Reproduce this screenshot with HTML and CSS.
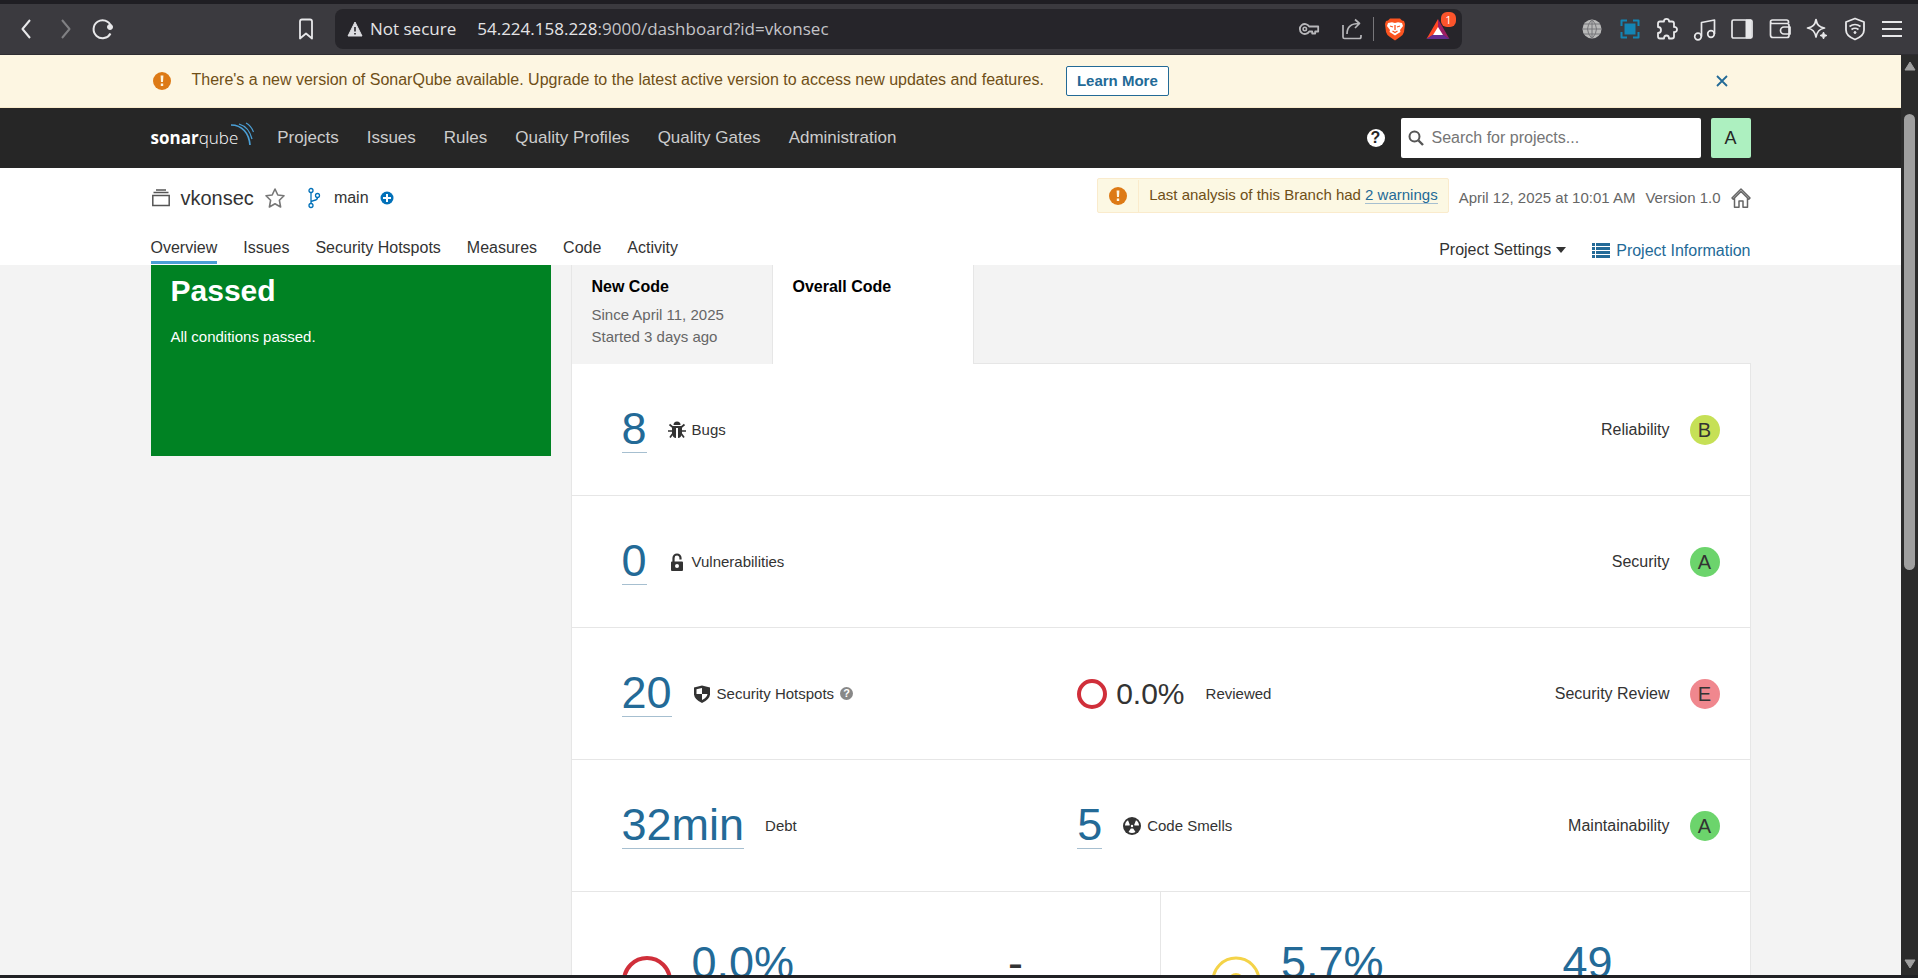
FILE: index.html
```html
<!DOCTYPE html>
<html lang="en">
<head>
  <meta charset="UTF-8" />
  <meta name="viewport" content="width=device-width, initial-scale=1.0" />
  <title>vkonsec - SonarQube</title>
  <link rel="stylesheet" href="styles.css">
</head>
<body>
  <!-- browser toolbar -->
  <div class="toolbar">
    <div class="toolbar-left">
      <button class="tool" aria-label="Back"><svg width="24" height="24" viewBox="0 0 24 24"><path d="M15 3L7.500 12l7.500 9" stroke-width="2"/></svg></button>
      <button class="tool tool-off" aria-label="Forward"><svg width="24" height="24" viewBox="0 0 24 24"><path d="M9 3l7.500 9L9 21" stroke-width="2"/></svg></button>
      <button class="tool" aria-label="Reload"><svg width="24" height="24" viewBox="0 0 24 24"><path d="M19.500 16.500A9 9 0 1 1 20 9" stroke-width="2"/><circle cx="19" cy="10" r="2.500" fill="#e8e8ea"/></svg></button>
      <button class="tool tool-bookmark" aria-label="Bookmark"><svg width="24" height="24" viewBox="0 0 24 24"><path d="M6 4.500q0-2 2-2h8q2 0 2 2v17l-6-5-6 5z" stroke-width="1.800"/></svg></button>
    </div>
    <div class="address">
      <svg width="16" height="16" viewBox="0 0 16 16"><path d="M8 1l7 14H1z" fill="#dcdce0" stroke="#dcdce0" stroke-linejoin="round"/><path d="M8 6v4.500M8 12v1.600" stroke="#26252a" stroke-width="1.600"/></svg>
      <span class="address-state">Not secure</span>
      <span class="address-url">54.224.158.228<span class="address-path">:9000/dashboard?id=vkonsec</span></span>
      <div class="address-tools">
        <button class="tool tool-dim" aria-label="Passwords"><svg width="24" height="24" viewBox="0 0 24 24"><path d="M12.200 9.500a5 5 0 1 0 0 5h3v2h3v-2h3v-5z" stroke-width="1.800"/><circle cx="7.800" cy="12" r="1.700" stroke-width="1.600"/></svg></button>
        <div class="address-pair">
          <button class="tool tool-dim" aria-label="Share"><svg width="24" height="24" viewBox="0 0 24 24"><path d="M3 8v12q0 1.500 1.500 1.500h15q1.500 0 1.500-2V18M7 17c0-7 4-10.500 12-10.500M15 2.500l4.500 4-4.500 4.500" stroke-width="1.700"/></svg></button>
          <span class="divider"></span>
          <button class="tool" aria-label="Brave Shields"><svg width="24" height="24" viewBox="0 0 24 24"><path d="M7 1.500h10l2 2 2 .5 1 3-1 8q-.5 2.500-4 5L12 23.500 7 20q-3.500-2.500-4-5L2 7l1-3 2-.5z" fill="#fb5420" stroke="none"/><path d="M5 6l4-.8 3 .8 3-.8 4 .8 1 3-3 4 .5 2-2.500 1.500L12 18.500 9 16.500 6.500 15l.5-2-3-4z" fill="#fff" stroke="none"/><path d="M7 9l3 1M17 9l-3 1M12 8v5M9.500 14l2.500 1.500 2.500-1.500" stroke="#fb5420" stroke-width="1.300"/></svg></button>
        </div>
        <button class="tool tool-rewards" aria-label="Brave Rewards"><svg width="24" height="24" viewBox="0 0 24 24"><path d="M12 2L.500 22 12 15z" fill="#ff4724" stroke="none"/><path d="M12 2l11.500 20L12 15z" fill="#9e1f63" stroke="none"/><path d="M.500 22h23L12 14z" fill="#662d91" stroke="none"/><path d="M12 10l5 8H7z" fill="#fff" stroke="none"/></svg><span class="badge">1</span></button>
      </div>
    </div>
    <div class="toolbar-right">
      <button class="tool" aria-label="Translate"><svg width="24" height="24" viewBox="0 0 24 24"><circle cx="12" cy="12" r="9.500" fill="#b9b9b9" stroke="none"/><path d="M2.500 12h19M4 7h16M4 17h16M12 2.500v19M12 2.500q-9 9.500 0 19M12 2.500q9 9.500 0 19" stroke="#77767a" stroke-width="1"/></svg></button>
      <button class="tool" aria-label="Capture"><svg width="24" height="24" viewBox="0 0 24 24"><path d="M3.500 9V3.500H9M15 3.500h5.500V9M20.500 15v5.500H15M9 20.500H3.500V15" stroke="#1485b5" stroke-width="2"/><path d="M6.500 6.500h11v11h-11z" fill="#1485b5" stroke="none"/></svg></button>
      <button class="tool" aria-label="Extensions"><svg width="24" height="24" viewBox="0 0 24 24"><path d="M3 6.500q0-2 2-2h4C8.500 1 14.500 1 14 4.500h3q2 0 2 2V10c4-.500 4 5.500 0 5v4.500q0 2-2 2h-3c0-4-5-4-5 0H5q-2 0-2-2V16c4 0 4-6 0-6z" stroke-width="1.800"/></svg></button>
      <button class="tool" aria-label="Media"><svg width="24" height="24" viewBox="0 0 24 24"><path d="M8.500 19.500v-14L21.500 3v14" stroke-width="1.700"/><circle cx="5" cy="19.500" r="3.300" stroke-width="1.700"/><circle cx="18" cy="17" r="3.300" stroke-width="1.700"/></svg></button>
      <button class="tool" aria-label="Sidebar"><svg width="24" height="24" viewBox="0 0 24 24"><rect x="2" y="3" width="20" height="18" rx="1.500" stroke-width="1.700"/><path d="M16 3h5v18h-5z" fill="#e8e8ea"/></svg></button>
      <button class="tool" aria-label="Wallet"><svg width="24" height="24" viewBox="0 0 24 24"><path d="M20.500 6V5q0-2-2-2h-14Q2.500 3 2.500 5v13q0 2.500 2.500 2.500h14q2 0 2-2V8.500q0-2-2-2H4q-1.500 0-1.500-2M22 10h-6a3.500 3.500 0 0 0 0 7h6z" stroke-width="1.700"/></svg></button>
      <button class="tool" aria-label="Leo AI"><svg width="24" height="24" viewBox="0 0 24 24"><path d="M11 2.500c1 5.500 3 7.500 8.500 8.500-5.500 1-7.500 3.500-8.500 9-1-5.500-3-8-8.500-9C8 10 10 8 11 2.500z" stroke-width="1.700"/><path d="M18.500 15l1 2.500 2.500 1-2.500 1-1 2.500-1-2.500-2.500-1 2.500-1z" fill="#e8e8ea" stroke-width="1"/></svg></button>
      <button class="tool" aria-label="VPN"><svg width="24" height="24" viewBox="0 0 24 24"><path d="M12 1.500l9 3.500v8q0 6-9 9.500Q3 19 3 13V5z" stroke-width="1.800"/><path d="M6.500 9.500q5.500-4 11 0M8.500 12.500q3.500-2.500 7 0" stroke-width="1.700"/><circle cx="12" cy="15.500" r="1" fill="#e8e8ea" stroke-width="1"/></svg></button>
      <button class="tool" aria-label="Menu"><svg width="24" height="24" viewBox="0 0 24 24"><path d="M2 5h20M2 12h20M2 19h20" stroke-width="2"/></svg></button>
    </div>
  </div>

  <div class="window">
    <div class="page">
      <div class="update">
        <div class="container update-row">
          <svg class="update-icon" width="20" height="20" viewBox="0 0 20 20"><circle cx="10" cy="10" r="9" fill="#dd7a16"/><path d="M8.600 4.500h2.800l-.4 6.500H9zM8.800 12.500h2.400v2.500H8.800z" fill="#fdf6e2"/></svg>
          <span class="update-text">There's a new version of SonarQube available. Upgrade to the latest active version to access new updates and features.</span>
          <a class="update-link" href="#">Learn More</a>
          <button class="update-close" aria-label="Dismiss"><svg width="14" height="14" viewBox="0 0 14 14"><path d="M2 2l10 10M12 2L2 12" stroke="#236a97" stroke-width="1.800"/></svg></button>
        </div>
      </div>

      <header class="navbar">
        <div class="container navbar-row">
          <a class="logo" href="#"><b>sonar</b>qube<svg width="24" height="28" viewBox="0 0 24 28" fill="none" stroke="#4b9fd5"><path d="M1 4c11 0 18 8 19 20" stroke-width="1.700"/><path d="M9 3c7 2 11 7 13 15" stroke-width="1.300"/><path d="M16 2c4 2 6 5 7.500 9" stroke-width="1.100"/></svg></a>
          <nav class="main-menu">
            <a href="#">Projects</a>
            <a href="#">Issues</a>
            <a href="#">Rules</a>
            <a href="#">Quality Profiles</a>
            <a href="#">Quality Gates</a>
            <a href="#">Administration</a>
          </nav>
          <button class="help" aria-label="Help">?</button>
          <label class="search">
            <svg width="16" height="16" viewBox="0 0 16 16" fill="none" stroke="#555"><circle cx="6.500" cy="6.500" r="5" stroke-width="2"/><path d="M10.500 10.500l4.500 4.500" stroke-width="2.400"/></svg>
            <input type="text" placeholder="Search for projects..." aria-label="Search for projects">
          </label>
          <button class="avatar">A</button>
        </div>
      </header>

      <div class="project">
        <div class="container">
          <div class="project-row">
            <svg width="20" height="20" viewBox="0 0 20 20" fill="none" stroke="#555" stroke-width="1.500"><path d="M1.800 7.500h16.400v10H1.800zM2.500 4.500h15M5 2h10"/></svg>
            <h1 class="project-name">vkonsec</h1>
            <button class="plain" aria-label="Favorite"><svg width="22" height="22" viewBox="0 0 22 22"><path d="M11 2l2.800 6 6.200.800-4.600 4.500 1.200 6.700-5.600-3.200L5.400 20l1.200-6.700L2 8.800 8.200 8z" fill="none" stroke="#777" stroke-width="1.600" stroke-linejoin="round"/></svg></button>
            <svg class="branch-icon" width="16" height="22" viewBox="0 0 16 22" fill="none" stroke="#0271b9" stroke-width="1.300"><circle cx="5" cy="3.500" r="2"/><circle cx="5" cy="18.500" r="2"/><circle cx="11.500" cy="8.500" r="2"/><path d="M5 5.500v11M11.500 10.500q0 2.500-3.500 3-3 .5-3 2"/></svg>
            <span class="branch">main</span>
            <svg width="14" height="14" viewBox="0 0 14 14"><circle cx="7" cy="7" r="6.500" fill="#0271b9"/><path d="M7 3v8M3 7h8" stroke="#fff" stroke-width="2"/></svg>
            <div class="warning">
              <span class="warning-icon"><svg width="20" height="20" viewBox="0 0 20 20"><circle cx="10" cy="10" r="9" fill="#dd7a16"/><path d="M8.600 4.500h2.800l-.4 6.500H9zM8.800 12.500h2.400v2.500H8.800z" fill="#fdf6e2"/></svg></span>
              <span class="warning-text">Last analysis of this Branch had <a href="#">2 warnings</a></span>
            </div>
            <span class="meta">April 12, 2025 at 10:01 AM</span>
            <span class="meta">Version 1.0</span>
            <a class="home" href="#" aria-label="Homepage"><svg width="20" height="20" viewBox="0 0 20 20" fill="none" stroke="#666" stroke-width="1.500" stroke-linejoin="round"><path d="M1 10l9-9 9 9-1.200 1.200L10 3.500l-7.800 7.700zM3.500 10v9.200H8V13h4v6.200h4.500V10"/></svg></a>
          </div>
          <div class="tabs-row">
            <nav class="tabs">
              <a class="active" href="#">Overview</a>
              <a href="#">Issues</a>
              <a href="#">Security Hotspots</a>
              <a href="#">Measures</a>
              <a href="#">Code</a>
              <a href="#">Activity</a>
            </nav>
            <button class="plain settings">Project Settings <svg width="10" height="6" viewBox="0 0 10 6"><path d="M0 0h10L5 6z" fill="#333"/></svg></button>
            <a class="info" href="#"><svg width="18" height="16" viewBox="0 0 18 16" fill="#236a97"><path d="M0 0h3v3H0zM0 4h3v3H0zM0 8h3v3H0zM0 12h3v3H0zM4 0h14v3H4zM4 4h14v3H4zM4 8h14v3H4zM4 12h14v3H4z"/></svg>Project Information</a>
          </div>
        </div>
      </div>

      <main class="container overview">
        <section class="gate">
          <h2>Passed</h2>
          <p>All conditions passed.</p>
        </section>

        <section class="measures">
          <div class="code-tabs">
            <button class="code-tab">
              <strong>New Code</strong>
              <span>Since April 11, 2025</span>
              <span>Started 3 days ago</span>
            </button>
            <button class="code-tab selected"><strong>Overall Code</strong></button>
            <div class="code-tabs-rest"></div>
          </div>

          <div class="panel">
            <div class="row">
              <div class="cell first">
                <a class="number" href="#">8</a>
                <span class="label"><svg width="18" height="18" viewBox="0 0 18 18"><path d="M5.500 4a3.500 3.500 0 0 1 7 0z" fill="#333"/><path d="M4 5h10v8q-1 4-4 4V7H8v10q-3 0-4-4z" fill="#333"/><path d="M4.500 6L1.500 3.500M13.500 6l3-2.500M0 10h4M14 10h4M4.500 13L2 16.500M13.500 13l2.500 3.500" stroke="#333" stroke-width="1.700"/></svg>Bugs</span>
              </div>
              <div class="cell rating">Reliability <a class="grade grade-b" href="#">B</a></div>
            </div>

            <div class="row">
              <div class="cell first">
                <a class="number" href="#">0</a>
                <span class="label"><svg width="18" height="18" viewBox="0 0 18 18"><path d="M5.500 9V5a3.500 3.500 0 0 1 7 0v1.500" fill="none" stroke="#333" stroke-width="2.200"/><path fill-rule="evenodd" d="M4 8.500h10q1 0 1 1V17q0 1-1 1H4q-1 0-1-1V9.500q0-1 1-1zM9 11a2 2 0 1 0 0 4 2 2 0 0 0 0-4z" fill="#333"/></svg>Vulnerabilities</span>
              </div>
              <div class="cell rating">Security <a class="grade grade-a" href="#">A</a></div>
            </div>

            <div class="row">
              <div class="cell first">
                <a class="number" href="#">20</a>
                <span class="label"><svg width="18" height="18" viewBox="0 0 18 18"><path d="M9 .500l8 2v7q-.5 5-8 8.500Q1.500 14.500 1 9.500v-7z" fill="#333"/><path d="M9 3v6H3.500V4.200zM9 9h5.500q-.5 3.500-5.500 6z" fill="#fff"/></svg>Security Hotspots<span class="hint">?</span></span>
              </div>
              <div class="cell">
                <svg width="30" height="30" viewBox="0 0 30 30"><circle cx="15" cy="15" r="13" fill="none" stroke="#d02f3a" stroke-width="4"/></svg>
                <span class="percent">0.0%</span>
                <span class="label">Reviewed</span>
              </div>
              <div class="cell rating">Security Review <a class="grade grade-e" href="#">E</a></div>
            </div>

            <div class="row">
              <div class="cell first">
                <a class="number" href="#">32min</a>
                <span class="label">Debt</span>
              </div>
              <div class="cell">
                <a class="number" href="#">5</a>
                <span class="label"><svg width="18" height="18" viewBox="0 0 18 18"><circle cx="9" cy="9" r="9" fill="#333"/><path d="M6.800 7.800L5 3.200Q2 5 2 8.500h4.500zM11.200 7.800L13 3.200q3 1.800 3 5.300h-4.500zM7.800 11.500L5.500 15q3.500 2 7 0l-2.300-3.500z" fill="#fff"/><circle cx="9" cy="9" r="1.200" fill="#fff"/></svg>Code Smells</span>
              </div>
              <div class="cell rating">Maintainability <a class="grade grade-a" href="#">A</a></div>
            </div>

            <div class="halves">
              <div class="half">
                <svg width="50" height="50" viewBox="0 0 50 50"><circle cx="25" cy="25" r="23" fill="none" stroke="#d02f3a" stroke-width="4"/></svg>
                <a class="number" href="#">0.0%</a>
                <span class="number none">-</span>
              </div>
              <div class="half">
                <svg width="50" height="50" viewBox="0 0 50 50"><circle cx="25" cy="25" r="23" fill="none" stroke="#f4d348" stroke-width="3"/><circle cx="25" cy="25" r="8" fill="#f4d348"/></svg>
                <a class="number" href="#">5.7%</a>
                <a class="number blocks" href="#">49</a>
              </div>
            </div>
          </div>
        </section>
      </main>
    </div>

    <div class="scrollbar">
      <svg width="12" height="10" viewBox="0 0 12 10"><path d="M6 1l5 8H1z" fill="#9f9f9f" stroke="#9f9f9f" stroke-linejoin="round"/></svg>
      <div class="track"><div class="thumb"></div></div>
      <svg width="12" height="10" viewBox="0 0 12 10"><path d="M6 9l5-8H1z" fill="#9f9f9f" stroke="#9f9f9f" stroke-linejoin="round"/></svg>
    </div>
  </div>
</body>
</html>
```
FILE: styles.css
```css
* {
  box-sizing: border-box;
}
body {
  margin: 0;
  height: 100vh;
  display: flex;
  flex-direction: column;
  overflow: hidden;
  border-top: 4px solid #1f1e23;
  border-bottom: 3px solid #202124;
  font-family: "Liberation Sans", Arial, sans-serif;
  font-size: 16px;
  line-height: 20px;
  color: #333;
  background-color: #f3f3f3;
}
h1, h2, p {
  margin: 0;
}
a {
  color: #236a97;
  text-decoration: none;
}
button {
  font: inherit;
  color: inherit;
  cursor: pointer;
}
svg {
  display: block;
  flex: none;
}

/* browser toolbar */
.toolbar {
  display: flex;
  flex: none;
  align-items: center;
  height: 51px;
  background-color: #3b3a3f;
  border-bottom: 1px solid #2e2d32;
}
.toolbar-left {
  display: flex;
  gap: 14px;
  width: 335px;
  padding: 0 17px 0 15px;
}
.tool {
  position: relative;
  padding: 0;
  border: 0;
  background: none;
}
.tool svg {
  fill: none;
  stroke: #e8e8ea;
  stroke-linejoin: round;
}
.tool-off {
  opacity: 0.4;
}
.tool-dim {
  opacity: 0.75;
}
.tool-bookmark {
  margin-left: auto;
}
.address {
  flex: 1;
  display: flex;
  align-items: center;
  height: 40px;
  padding: 0 12px;
  border-radius: 8px;
  background-color: #26252a;
  color: #e4e4e6;
  font-family: "Open Sans", "Noto Sans", sans-serif;
  font-size: 17px;
}
.address-state {
  margin: 0 21px 0 7px;
}
.address-path {
  color: #c4c4c8;
}
.address-tools {
  display: flex;
  gap: 19px;
  margin-left: auto;
}
.address-pair {
  display: flex;
  gap: 9px;
}
.divider {
  width: 1px;
  background-color: #77767a;
}
.badge {
  position: absolute;
  top: -5px;
  right: -6px;
  width: 15px;
  height: 15px;
  border-radius: 6px;
  background-color: #fb542b;
  color: #fff;
  font-size: 11px;
  line-height: 15px;
}
.toolbar-right {
  display: flex;
  justify-content: space-between;
  width: 456px;
  padding: 0 14px 0 118px;
}

.window {
  flex: 1;
  min-height: 0;
  display: flex;
}
.page {
  flex: 1;
  min-width: 0;
  overflow: hidden;
}
.container {
  max-width: 1640px;
  margin: 0 auto;
  padding: 0 20px;
}

/* update banner */
.update {
  background-color: #fdf6e2;
  border-bottom: 1px solid #faebcc;
}
.update-row {
  display: flex;
  align-items: center;
  height: 52px;
}
.update-icon {
  margin: 0 20px 0 1px;
}
.update-text {
  color: #6f4f17;
  padding-bottom: 2px;
}
.update-link {
  margin-left: 22px;
  padding: 4px 10px;
  border: 1px solid #236a97;
  border-radius: 2px;
  background-color: #fff;
  font-size: 15px;
  font-weight: bold;
}
.update-close {
  margin: 0 22px 0 auto;
  padding: 0;
  border: 0;
  background: none;
}

/* top navigation */
.navbar {
  background-color: #262626;
}
.navbar-row {
  display: flex;
  align-items: center;
  height: 60px;
}
.logo {
  display: flex;
  align-items: center;
  margin-right: 23px;
  color: #fff;
  font-family: "Open Sans", sans-serif;
  font-size: 17px;
  font-weight: 300;
}
.logo b {
  font-weight: 700;
}
.logo svg {
  margin: 0 0 6px -8px;
}
.main-menu {
  display: flex;
  gap: 28px;
}
.main-menu a {
  color: #ccc;
  font-size: 17px;
}
.help {
  width: 18px;
  height: 18px;
  margin-left: auto;
  padding: 0;
  border: 0;
  border-radius: 50%;
  background-color: #fff;
  color: #262626;
  font-weight: bold;
  line-height: 18px;
}
.search {
  display: flex;
  align-items: center;
  gap: 8px;
  width: 300px;
  height: 40px;
  margin: 0 10px 0 16px;
  padding: 0 7px;
  border-radius: 2px;
  background-color: #fff;
}
.search input {
  flex: 1;
  min-width: 0;
  padding: 0;
  border: 0;
  outline: 0;
  font: inherit;
}
.search input::placeholder {
  color: #757575;
}
.avatar {
  width: 40px;
  height: 40px;
  padding: 0;
  border: 0;
  border-radius: 2px;
  background-color: #adf0c0;
  color: #262626;
  font-size: 18px;
}

/* project header */
.project {
  background-color: #fff;
}
.project-row {
  display: flex;
  align-items: center;
  padding-top: 10px;
}
.project-name {
  margin: 0 10px;
  font-size: 20px;
  font-weight: normal;
}
.plain {
  padding: 0;
  border: 0;
  background: none;
}
.branch-icon {
  margin: 0 12px 0 20px;
}
.branch {
  margin-right: 11px;
}
.warning {
  display: flex;
  align-items: center;
  height: 35px;
  margin: 0 10px 4px auto;
  border: 1px solid #faebcc;
  border-radius: 2px;
  background-color: #fcf8e3;
  color: #6f4f17;
  font-size: 15px;
}
.warning-icon {
  padding: 6px 10px;
  border-right: 1px solid #faebcc;
}
.warning-text {
  padding: 0 10px 2px;
}
.warning-text a {
  border-bottom: 1px solid #a6bfd0;
}
.meta {
  margin-right: 10px;
  color: #666;
  font-size: 15px;
}
.tabs-row {
  display: flex;
  align-items: flex-end;
  padding-top: 21px;
}
.tabs {
  display: flex;
  gap: 26px;
  margin-right: auto;
  padding-bottom: 1px;
}
.tabs a {
  padding-bottom: 3px;
  border-bottom: 3px solid transparent;
  color: #333;
}
.tabs .active {
  border-color: #4b9fd5;
}
.settings {
  display: flex;
  align-items: center;
  gap: 5px;
  margin-right: 26px;
  padding-bottom: 5px;
}
.info {
  display: flex;
  align-items: center;
  gap: 6px;
  padding-bottom: 4px;
}

/* overview */
.overview {
  display: flex;
  align-items: flex-start;
  gap: 20px;
}
.gate {
  width: 25%;
  height: 191px;
  padding: 10px 20px;
  background-color: #008223;
  color: #fff;
  font-size: 15px;
}
.gate h2 {
  margin-bottom: 20px;
  font-size: 30px;
  line-height: 32px;
}
.measures {
  flex: 1;
}
.code-tabs {
  display: flex;
  height: 99px;
  border-left: 1px solid #e6e6e6;
}
.code-tab {
  display: flex;
  flex-direction: column;
  width: 201px;
  padding: 12px 20px;
  border: 0;
  border-right: 1px solid #e6e6e6;
  background: none;
  color: #666;
  font-size: 15px;
  line-height: 22px;
  text-align: left;
}
.code-tab strong {
  margin-bottom: 7px;
  color: #000;
  font-size: 16px;
  line-height: 20px;
}
.code-tab.selected {
  background-color: #fff;
}
.code-tabs-rest {
  flex: 1;
  border-bottom: 1px solid #e6e6e6;
}
.panel {
  border: 1px solid #e6e6e6;
  border-top: 0;
  background-color: #fff;
}
.row {
  display: flex;
  align-items: center;
  height: 132px;
  padding: 0 30px 0 50px;
}
.row, .halves {
  border-bottom: 1px solid #e6e6e6;
}
.cell {
  display: flex;
  align-items: center;
}
.first {
  width: 41.5%;
}
.number {
  border-bottom: 1px solid #a6bfd0;
  font-size: 45px;
  line-height: 46px;
}
.label {
  display: flex;
  align-items: center;
  gap: 6px;
  margin-left: 21px;
  font-size: 15px;
}
.hint {
  width: 13px;
  height: 13px;
  border-radius: 50%;
  background-color: #888;
  color: #fff;
  font-size: 11px;
  font-weight: bold;
  line-height: 13px;
  text-align: center;
}
.percent {
  margin-left: 9px;
  font-size: 30px;
}
.rating {
  gap: 20px;
  margin-left: auto;
}
.grade {
  width: 30px;
  height: 30px;
  border-radius: 50%;
  color: #333;
  font-size: 20px;
  line-height: 30px;
  text-align: center;
}
.grade-a {
  background-color: #6cd46c;
}
.grade-b {
  background-color: #c6e056;
}
.grade-e {
  background-color: #f0878e;
}
.halves {
  display: flex;
}
.half {
  flex: 1;
  display: flex;
  align-items: flex-start;
  gap: 20px;
  height: 180px;
  padding: 48px 137px 0 50px;
}
.half svg {
  margin-top: 16px;
}
.half:first-child {
  border-right: 1px solid #e6e6e6;
}
.none, .blocks {
  margin-left: auto;
}
.none {
  border: 0;
}

/* page scrollbar */
.scrollbar {
  display: flex;
  flex-direction: column;
  align-items: center;
  width: 17px;
  padding: 6px 0;
  background-color: #2b2b2b;
}
.track {
  flex: 1;
  padding-top: 43px;
}
.thumb {
  width: 11px;
  height: 54%;
  border-radius: 6px;
  background-color: #9f9f9f;
}
```
